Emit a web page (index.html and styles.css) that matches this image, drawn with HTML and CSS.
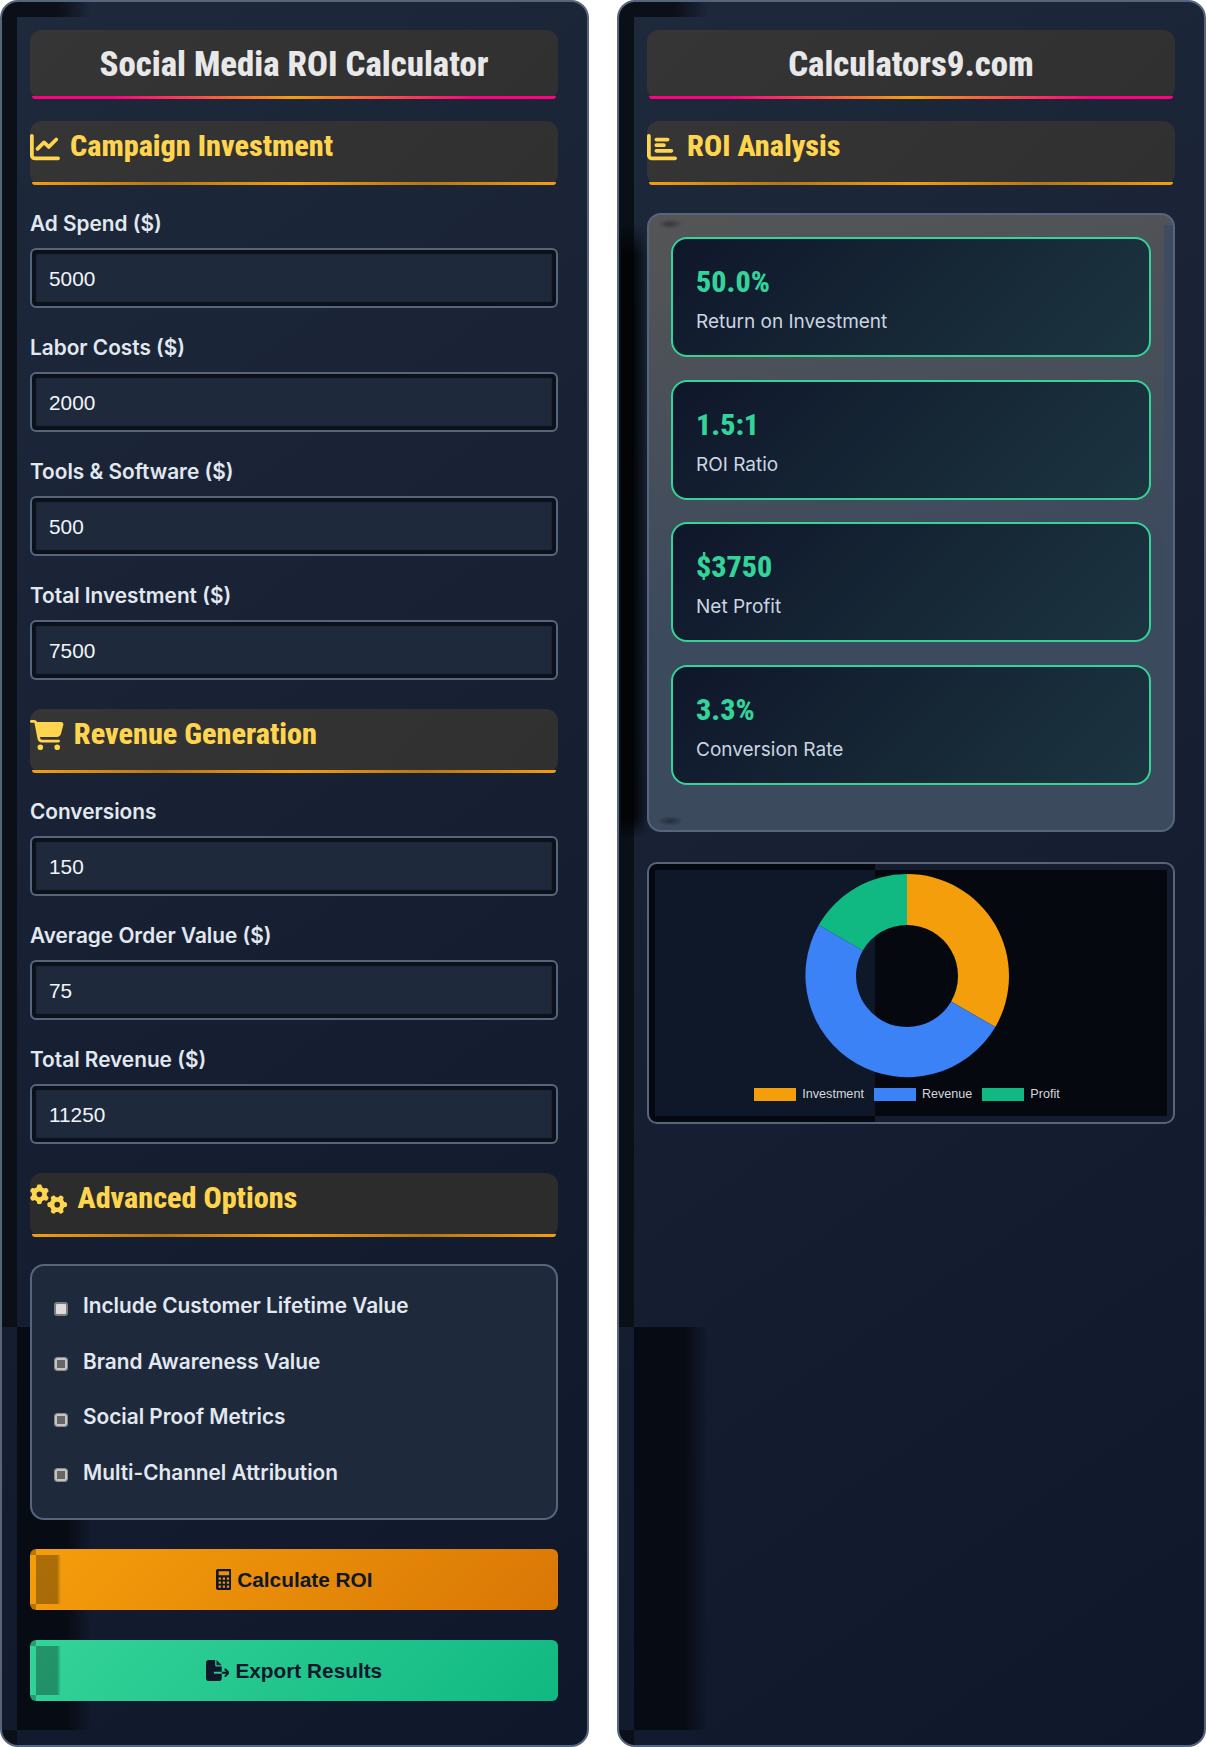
FILE: index.html
```html
<!DOCTYPE html>
<html lang="en">
<head>
  <meta charset="UTF-8" />
  <meta name="viewport" content="width=device-width, initial-scale=1.0"/>
  <title>Social Media ROI Calculator</title>
  <link rel="stylesheet" href="styles.css">
</head>
<body>
  <div class="layout">
    <div class="panel">
      <h1 class="page-title">Social Media ROI Calculator</h1>

      <h2 class="section-title">
        <svg class="icon" viewBox="0 0 512 512"><path d="M64 64c0-17.7-14.3-32-32-32S0 46.3 0 64V400c0 44.2 35.8 80 80 80H480c17.7 0 32-14.3 32-32s-14.3-32-32-32H80c-8.8 0-16-7.2-16-16V64zm406.6 86.6c12.5-12.5 12.5-32.8 0-45.3s-32.8-12.5-45.3 0L320 210.7l-57.4-57.4c-12.5-12.5-32.8-12.5-45.3 0l-112 112c-12.5 12.5-12.5 32.8 0 45.3s32.8 12.5 45.3 0L240 221.3l57.4 57.4c12.5 12.5 32.8 12.5 45.3 0l128-128z"/></svg>
        Campaign Investment
      </h2>
      <div class="field"><label>Ad Spend ($)</label><input type="number" value="5000"></div>
      <div class="field"><label>Labor Costs ($)</label><input type="number" value="2000"></div>
      <div class="field"><label>Tools &amp; Software ($)</label><input type="number" value="500"></div>
      <div class="field"><label>Total Investment ($)</label><input type="number" value="7500"></div>

      <h2 class="section-title section-title-next">
        <svg class="icon" viewBox="0 0 576 512"><path d="M0 24C0 10.7 10.7 0 24 0H69.5c22 0 41.5 12.8 50.6 32h411c26.3 0 45.5 25 38.6 50.4l-41 152.3c-8.5 31.4-37 53.3-69.5 53.3H170.7l5.4 28.5c2.2 11.3 12.1 19.5 23.6 19.5H488c13.3 0 24 10.7 24 24s-10.7 24-24 24H199.7c-34.6 0-64.3-24.6-70.7-58.5L77.4 54.5c-.7-3.8-4-6.5-7.9-6.5H24C10.7 48 0 37.3 0 24zM128 464a48 48 0 1 1 96 0 48 48 0 1 1 -96 0zm336-48a48 48 0 1 1 0 96 48 48 0 1 1 0-96z"/></svg>
        Revenue Generation
      </h2>
      <div class="field"><label>Conversions</label><input type="number" value="150"></div>
      <div class="field"><label>Average Order Value ($)</label><input type="number" value="75"></div>
      <div class="field"><label>Total Revenue ($)</label><input type="number" value="11250"></div>

      <h2 class="section-title section-title-next section-title-dark">
        <svg class="icon" viewBox="0 0 640 512"><path d="M308.5 135.3c7.1-6.3 9.9-16.2 6.2-25c-2.3-5.3-4.8-10.5-7.6-15.5L304 89.4c-3-5-6.3-9.9-9.8-14.6c-5.7-7.6-15.7-10.1-24.7-7.1l-28.2 9.3c-10.7-8.8-23-16-36.2-20.9L199 27.1c-1.9-9.3-9.1-16.7-18.5-17.8C173.9 8.4 167.2 8 160.4 8h-.7c-6.8 0-13.5 .4-20.1 1.2c-9.4 1.1-16.6 8.6-18.5 17.8L115 56.1c-13.3 5-25.5 12.1-36.2 20.9L50.5 67.8c-9-3-19-.5-24.7 7.1c-3.5 4.7-6.8 9.6-9.9 14.6l-3 5.3c-2.8 5-5.3 10.2-7.6 15.6c-3.7 8.7-.9 18.6 6.2 25l22.2 19.8C32.6 161.9 32 168.9 32 176s.6 14.1 1.7 20.9L11.5 216.7c-7.1 6.3-9.9 16.2-6.2 25c2.3 5.3 4.8 10.5 7.6 15.6l3 5.2c3 5.1 6.3 9.9 9.9 14.6c5.7 7.6 15.7 10.1 24.7 7.1l28.2-9.3c10.7 8.8 23 16 36.2 20.9l6.1 29.1c1.9 9.3 9.1 16.7 18.5 17.8c6.7 .8 13.5 1.2 20.4 1.2s13.7-.4 20.4-1.2c9.4-1.1 16.6-8.6 18.5-17.8l6.1-29.1c13.3-5 25.5-12.1 36.2-20.9l28.2 9.3c9 3 19 .5 24.7-7.1c3.5-4.7 6.8-9.5 9.8-14.6l3.1-5.4c2.8-5 5.3-10.2 7.6-15.5c3.7-8.7 .9-18.6-6.2-25l-22.2-19.8c1.1-6.8 1.7-13.8 1.7-20.9s-.6-14.1-1.7-20.9l22.2-19.8zM112 176a48 48 0 1 1 96 0 48 48 0 1 1 -96 0zM504.7 500.5c6.3 7.1 16.2 9.9 25 6.2c5.3-2.3 10.5-4.8 15.5-7.6l5.4-3.1c5-3 9.9-6.3 14.6-9.8c7.6-5.7 10.1-15.7 7.1-24.7l-9.3-28.2c8.8-10.7 16-23 20.9-36.2l29.1-6.1c9.3-1.9 16.7-9.1 17.8-18.5c.8-6.7 1.2-13.5 1.2-20.4s-.4-13.7-1.2-20.4c-1.1-9.4-8.6-16.6-17.8-18.5L583.9 307c-5-13.3-12.1-25.5-20.9-36.2l9.3-28.2c3-9 .5-19-7.1-24.7c-4.7-3.5-9.6-6.8-14.6-9.9l-5.3-3c-5-2.8-10.2-5.3-15.6-7.6c-8.7-3.7-18.6-.9-25 6.2l-19.8 22.2c-6.8-1.1-13.8-1.7-20.9-1.7s-14.1 .6-20.9 1.7l-19.8-22.2c-6.3-7.1-16.2-9.9-25-6.2c-5.3 2.3-10.5 4.8-15.6 7.6l-5.2 3c-5.1 3-9.9 6.3-14.6 9.9c-7.6 5.7-10.1 15.7-7.1 24.7l9.3 28.2c-8.8 10.7-16 23-20.9 36.2L315.1 313c-9.3 1.9-16.7 9.1-17.8 18.5c-.8 6.7-1.2 13.5-1.2 20.4s.4 13.7 1.2 20.4c1.1 9.4 8.6 16.6 17.8 18.5l29.1 6.1c5 13.3 12.1 25.5 20.9 36.2l-9.3 28.2c-3 9-.5 19 7.1 24.7c4.7 3.5 9.5 6.8 14.6 9.8l5.4 3.1c5 2.8 10.2 5.3 15.5 7.6c8.7 3.7 18.6 .9 25-6.2l19.8-22.2c6.8 1.1 13.8 1.7 20.9 1.7s14.1-.6 20.9-1.7l19.8 22.2zM464 304a48 48 0 1 1 0 96 48 48 0 1 1 0-96z"/></svg>
        Advanced Options
      </h2>
      <div class="options">
        <label class="option"><input type="checkbox" checked>Include Customer Lifetime Value</label>
        <label class="option"><input type="checkbox">Brand Awareness Value</label>
        <label class="option"><input type="checkbox">Social Proof Metrics</label>
        <label class="option"><input type="checkbox">Multi-Channel Attribution</label>
      </div>

      <button class="btn btn-primary">
        <svg class="btn-icon" viewBox="0 0 384 512"><path fill-rule="evenodd" d="M48 0H336C362 0 384 22 384 48V464C384 490 362 512 336 512H48C22 512 0 490 0 464V48C0 22 22 0 48 0ZM64 56V152H320V56ZM64 208V264H120V208ZM164 208V264H220V208ZM264 208V264H320V208ZM64 304V360H120V304ZM164 304V360H220V304ZM264 304V360H320V304ZM64 400V456H120V400ZM164 400V456H220V400ZM264 400V456H320V400Z"/></svg>
        Calculate ROI
      </button>
      <button class="btn btn-success">
        <svg class="btn-icon" viewBox="0 0 576 512"><path d="M0 64C0 28.7 28.7 0 64 0H224V128c0 17.7 14.3 32 32 32H384V288H216c-13.3 0-24 10.7-24 24s10.7 24 24 24H384V448c0 35.3-28.7 64-64 64H64c-35.3 0-64-28.7-64-64V64zM384 336V288H494.1l-39-39c-9.4-9.4-9.4-24.6 0-33.9s24.6-9.4 33.9 0l80 80c9.4 9.4 9.4 24.6 0 33.9l-80 80c-9.4 9.4-24.6 9.4-33.9 0s-9.4-24.6 0-33.9l39-39H384zm0-208H256V0L384 128z"/></svg>
        Export Results
      </button>
    </div>

    <div class="panel">
      <h1 class="page-title">Calculators9.com</h1>

      <h2 class="section-title">
        <svg class="icon" viewBox="0 0 512 512"><path d="M32 32c17.7 0 32 14.3 32 32V400c0 8.8 7.2 16 16 16H480c17.7 0 32 14.3 32 32s-14.3 32-32 32H80c-44.2 0-80-35.8-80-80V64C0 46.3 14.3 32 32 32zm96 96c0-17.7 14.3-32 32-32l192 0c17.7 0 32 14.3 32 32s-14.3 32-32 32l-192 0c-17.7 0-32-14.3-32-32zm32 64H288c17.7 0 32 14.3 32 32s-14.3 32-32 32H160c-17.7 0-32-14.3-32-32s14.3-32 32-32zm0 96H416c17.7 0 32 14.3 32 32s-14.3 32-32 32H160c-17.7 0-32-14.3-32-32s14.3-32 32-32z"/></svg>
        ROI Analysis
      </h2>

      <div class="stats">
        <div class="stat"><div class="stat-value">50.0%</div><div class="stat-label">Return on Investment</div></div>
        <div class="stat"><div class="stat-value">1.5:1</div><div class="stat-label">ROI Ratio</div></div>
        <div class="stat"><div class="stat-value">$3750</div><div class="stat-label">Net Profit</div></div>
        <div class="stat"><div class="stat-value">3.3%</div><div class="stat-label">Conversion Rate</div></div>
      </div>

      <div class="chart-box">
        <svg class="donut" viewBox="-102 -102 204 204">
          <path fill="#f59e0b" d="M0 -102A102 102 0 0 1 88.33 51L44.17 25.5A51 51 0 0 0 0 -51Z"/>
          <path fill="#3b82f6" d="M88.33 51A102 102 0 0 1 -88.33 -51L-44.17 -25.5A51 51 0 0 0 44.17 25.5Z"/>
          <path fill="#10b981" d="M-88.33 -51A102 102 0 0 1 0 -102L0 -51A51 51 0 0 0 -44.17 -25.5Z"/>
        </svg>
        <div class="legend">
          <span class="legend-item"><i class="swatch swatch-orange"></i>Investment</span>
          <span class="legend-item"><i class="swatch swatch-blue"></i>Revenue</span>
          <span class="legend-item"><i class="swatch swatch-green"></i>Profit</span>
        </div>
      </div>
    </div>
  </div>
</body>
</html>
```

FILE: styles.css
```css
:root {
  --slate: #56657c;
  --panel-dark: #0a0f18;
  --yellow: #ffd54f;
  --green: #34d399;
}

* {
  box-sizing: border-box;
}

body {
  margin: 0;
  background: #fff;
  font-family: Inter, "Liberation Sans", sans-serif;
}

.layout {
  display: grid;
  grid-template-columns: 589px 589px;
  gap: 28px;
  min-height: 1747px;
}

.panel {
  border: 2px solid var(--slate);
  border-radius: 18px;
  padding: 28px 29px 28px 28px;
  background:
    linear-gradient(90deg, #0b0f18 55px, transparent) 0 0 / 90px 15px no-repeat,
    linear-gradient(var(--panel-dark), var(--panel-dark)) 0 0 / 15px 1325px no-repeat,
    linear-gradient(90deg, #070b13 50px, transparent) 15px 1325px / 75px 403px no-repeat,
    linear-gradient(var(--panel-dark), var(--panel-dark)) 0 1728px / 15px 17px no-repeat,
    linear-gradient(145deg, #1e293b, #0f172a);
}

.page-title {
  position: relative;
  height: 69px;
  margin: 0 0 22px;
  border-radius: 12px;
  background: linear-gradient(135deg, #353535, #303030);
  color: #e8e8e8;
  font-family: "Roboto Condensed", Roboto, sans-serif;
  font-stretch: condensed;
  font-size: 34.8px;
  font-weight: 800;
  line-height: 69px;
  text-align: center;
}

.page-title::after {
  content: "";
  position: absolute;
  left: 2px;
  right: 2px;
  bottom: 0;
  height: 3px;
  border-radius: 0 0 8px 8px;
  background: linear-gradient(90deg, #ff0080 15%, #f59e0b 50%, #ff0080 85%);
}

.section-title {
  position: relative;
  display: flex;
  align-items: flex-start;
  gap: 10px;
  height: 64px;
  margin: 0 0 25px;
  padding-top: 7px;
  border-radius: 12px;
  background: linear-gradient(135deg, #353535, #303030);
  color: var(--yellow);
  font-family: "Roboto Condensed", Roboto, sans-serif;
  font-stretch: condensed;
  font-size: 30.2px;
  font-weight: 800;
  line-height: 36px;
}

.section-title-next {
  margin-top: 29px;
}

.section-title-dark {
  background: #2c2c2c;
  margin-bottom: 27px;
}

.section-title::after {
  content: "";
  position: absolute;
  left: 2px;
  right: 2px;
  bottom: 0;
  height: 3px;
  border-radius: 0 0 8px 8px;
  background: linear-gradient(90deg, #f59e0b, #b8770f 25%, #f59e0b 50%, #b8770f 75%, #f59e0b);
}

.icon {
  height: 30px;
  margin-top: 4px;
  fill: var(--yellow);
}

.field {
  margin-bottom: 26px;
}

.field label {
  display: block;
  margin-bottom: 11px;
  color: #e2e8f0;
  font-size: 20.8px;
  font-weight: 600;
  line-height: 27px;
}

.field input {
  display: block;
  width: 100%;
  height: 60px;
  padding: 1px 17px 0;
  border: 2px solid var(--slate);
  border-radius: 6px;
  background: #1e293b;
  box-shadow: inset 0 0 1px 4px #0b111b;
  color: #f1f5f9;
  font-family: "Liberation Sans", sans-serif;
  font-size: 20.8px;
}

.options {
  height: 256px;
  margin-bottom: 29px;
  padding: 12px 22px;
  border: 2px solid var(--slate);
  border-radius: 14px;
  background: #1e293b;
}

.option {
  display: flex;
  align-items: center;
  gap: 15px;
  height: 55.5px;
  color: #e2e8f0;
  font-size: 20.8px;
  font-weight: 600;
}

.option input {
  appearance: none;
  width: 14px;
  height: 14px;
  margin: 6px 0 0;
  border: 1px solid #8a8a8a;
  border-radius: 3px;
  background: #666;
  box-shadow: inset 0 0 0 2px #c4c4c4;
}

.option input:checked {
  border: 2px solid #7a7d82;
  background: #dcdcdc;
  box-shadow: none;
}

.btn {
  position: relative;
  display: flex;
  align-items: center;
  justify-content: center;
  gap: 6px;
  width: 100%;
  height: 61px;
  margin-bottom: 30px;
  border: none;
  border-radius: 6px;
  color: #0f172a;
  font-family: "Liberation Sans", sans-serif;
  font-size: 20.8px;
  font-weight: 700;
}

.btn::before {
  content: "";
  position: absolute;
  left: 6px;
  top: 6px;
  width: 25px;
  height: 49px;
  background: linear-gradient(90deg, rgba(0, 0, 0, 0.3) 84%, transparent);
}

.btn-primary {
  background:
    linear-gradient(rgba(0, 0, 0, 0.25), rgba(0, 0, 0, 0.25)) 0 0 / 6px 6px no-repeat,
    linear-gradient(rgba(0, 0, 0, 0.25), rgba(0, 0, 0, 0.25)) 0 100% / 6px 6px no-repeat,
    linear-gradient(135deg, #f59e0b, #d97706);
}

.btn-success {
  margin-bottom: 0;
  background:
    linear-gradient(rgba(0, 0, 0, 0.25), rgba(0, 0, 0, 0.25)) 0 0 / 6px 6px no-repeat,
    linear-gradient(rgba(0, 0, 0, 0.25), rgba(0, 0, 0, 0.25)) 0 100% / 6px 6px no-repeat,
    linear-gradient(135deg, #34d399, #10b981);
}

.btn-icon {
  height: 21px;
  fill: #0f172a;
}

.stats {
  position: relative;
  height: 619px;
  margin: 28px 0 30px;
  padding: 22px;
  border: 2px solid var(--slate);
  border-radius: 14px;
  background:
    linear-gradient(#3f4b60, #3c4a5e) 100% 10px / 9px calc(100% - 10px) no-repeat,
    radial-gradient(closest-side, rgba(30, 35, 45, 0.6), transparent) 8px 4px / 26px 10px no-repeat,
    radial-gradient(closest-side, rgba(20, 25, 35, 0.6), transparent) 8px calc(100% - 4px) / 26px 10px no-repeat,
    linear-gradient(170deg, #555, #3c4a5e 60%);
}

/* dark smear down the left edge of the results box */
.stats::before {
  content: "";
  position: absolute;
  left: -28px;
  top: 10px;
  bottom: -8px;
  width: 26px;
  background: linear-gradient(90deg, rgba(0, 0, 0, 0.7), rgba(0, 0, 0, 0.75) 55%, rgba(0, 0, 0, 0.1));
  mask-image: linear-gradient(transparent, #000 30px, #000 calc(100% - 20px), transparent);
}

.stat {
  height: 120px;
  margin-bottom: 22.7px;
  padding: 26px 23px 0;
  border: 2px solid var(--green);
  border-radius: 16px;
  background: linear-gradient(135deg, #0f172a, #1c3540);
}

.stat-value {
  margin-bottom: 10px;
  color: var(--green);
  font-family: "Roboto Condensed", Roboto, sans-serif;
  font-stretch: condensed;
  font-size: 30px;
  font-weight: 800;
  line-height: 34px;
}

.stat-label {
  color: #cbd5e1;
  font-size: 19px;
  line-height: 26px;
}

.chart-box {
  display: flex;
  flex-direction: column;
  align-items: center;
  height: 262px;
  padding-top: 10px;
  border: 2px solid var(--slate);
  border-radius: 10px;
  background:
    linear-gradient(#0f1828, #0f1828) 6px 6px / 220px calc(100% - 12px) no-repeat,
    linear-gradient(#05080f, #05080f) 226px 6px / calc(100% - 232px) calc(100% - 12px) no-repeat,
    linear-gradient(#05080f, #05080f) 0 0 / 226px 100% no-repeat,
    #141c2e;
}

.donut {
  width: 204px;
  height: 204px;
  margin-left: -8px;
}

.legend {
  display: flex;
  gap: 10px;
  margin-top: 9px;
  margin-left: -8px;
  color: #d4d8de;
  font-family: "Liberation Sans", sans-serif;
  font-size: 12.6px;
}

.legend-item {
  display: flex;
  align-items: center;
  gap: 6px;
}

.swatch {
  width: 42px;
  height: 13px;
}

.swatch-orange {
  background: #f59e0b;
}

.swatch-blue {
  background: #3b82f6;
}

.swatch-green {
  background: #10b981;
}
```
